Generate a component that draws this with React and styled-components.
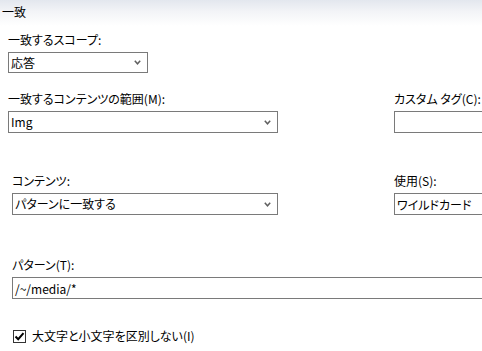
import React from "react";
import styled, { createGlobalStyle } from "styled-components";

const GlobalStyle = createGlobalStyle`
  html, body {
    margin: 0;
    padding: 0;
    background: #ffffff;
    overflow: hidden;
  }
  body {
    font-family: "Noto Sans CJK JP", "Noto Sans", sans-serif;
    font-size: 12px;
    color: #000000;
    font-feature-settings: "palt";
  }
`;

const Page = styled.div`
  width: 482px;
  height: 351px;
  overflow: hidden;
`;

const Header = styled.div`
  height: 26px;
  padding: 4px 0 0 2px;
  box-sizing: border-box;
  line-height: 16px;
  background: linear-gradient(#e3e7ee 0%, #f3f4f7 45%, #ffffff 100%);
`;

const Section = styled.div`
  display: flex;
  margin-top: ${(p) => p.top}px;
  padding-left: ${(p) => p.indent}px;
`;

const Field = styled.div`
  display: flex;
  flex-direction: column;
  width: ${(p) => p.width}px;
  flex-shrink: 0;
`;

const Label = styled.div`
  line-height: 16px;
  height: 16px;
  margin-bottom: 4px;
  white-space: nowrap;
`;

const Select = styled.div`
  display: flex;
  align-items: center;
  justify-content: space-between;
  height: ${(p) => p.h ?? 22}px;
  box-sizing: border-box;
  border: 1px solid #7a7a7a;
  padding: 0 6px 0 2px;
  background: #ffffff;
  line-height: 16px;
`;

const TextBox = styled.div`
  height: 22px;
  box-sizing: border-box;
  border: 1px solid #7a7a7a;
  padding: 0 2px;
  display: flex;
  align-items: center;
  background: #ffffff;
  white-space: nowrap;
`;

const Spacer = styled.div`
  width: ${(p) => p.w}px;
  flex-shrink: 0;
`;

const CheckRow = styled.label`
  display: flex;
  align-items: center;
  gap: 6px;
  margin-top: 29px;
  padding-left: 13px;
  line-height: 16px;
`;

const Box = styled.span`
  width: 13px;
  height: 13px;
  box-sizing: border-box;
  border: 1px solid #333333;
  display: flex;
  align-items: center;
  justify-content: center;
  background: #ffffff;
`;

const Chevron = () => (
  <svg width="7" height="5" viewBox="0 0 7 5">
    <path d="M0.8 0.8 L3.5 3.8 L6.2 0.8" fill="none" stroke="#606060" strokeWidth="1.5" />
  </svg>
);

const Check = () => (
  <svg width="11" height="11" viewBox="0 0 11 11">
    <path d="M1.5 5.5 L4.2 8.2 L9.5 2.2" fill="none" stroke="#000" strokeWidth="2" />
  </svg>
);

const App = () => {
  return (
    <Page>
      <GlobalStyle />
      <Header>一致</Header>

      <Section top={6} indent={8}>
        <Field width={140}>
          <Label>一致するスコープ:</Label>
          <Select h={21}>
            <span>応答</span>
            <Chevron />
          </Select>
        </Field>
      </Section>

      <Section top={18} indent={8}>
        <Field width={270}>
          <Label>一致するコンテンツの範囲(M):</Label>
          <Select>
            <span>Img</span>
            <Chevron />
          </Select>
        </Field>
        <Spacer w={116} />
        <Field width={100}>
          <Label>カスタム タグ(C):</Label>
          <TextBox />
        </Field>
      </Section>

      <Section top={40} indent={12}>
        <Field width={266}>
          <Label>コンテンツ:</Label>
          <Select>
            <span>パターンに一致する</span>
            <Chevron />
          </Select>
        </Field>
        <Spacer w={116} />
        <Field width={100}>
          <Label>使用(S):</Label>
          <TextBox>ワイルドカード</TextBox>
        </Field>
      </Section>

      <Section top={42} indent={12}>
        <Field width={480}>
          <Label>パターン(T):</Label>
          <TextBox>/~/media/*</TextBox>
        </Field>
      </Section>

      <CheckRow>
        <Box>
          <Check />
        </Box>
        大文字と小文字を区別しない(I)
      </CheckRow>
    </Page>
  );
};

export default App;
